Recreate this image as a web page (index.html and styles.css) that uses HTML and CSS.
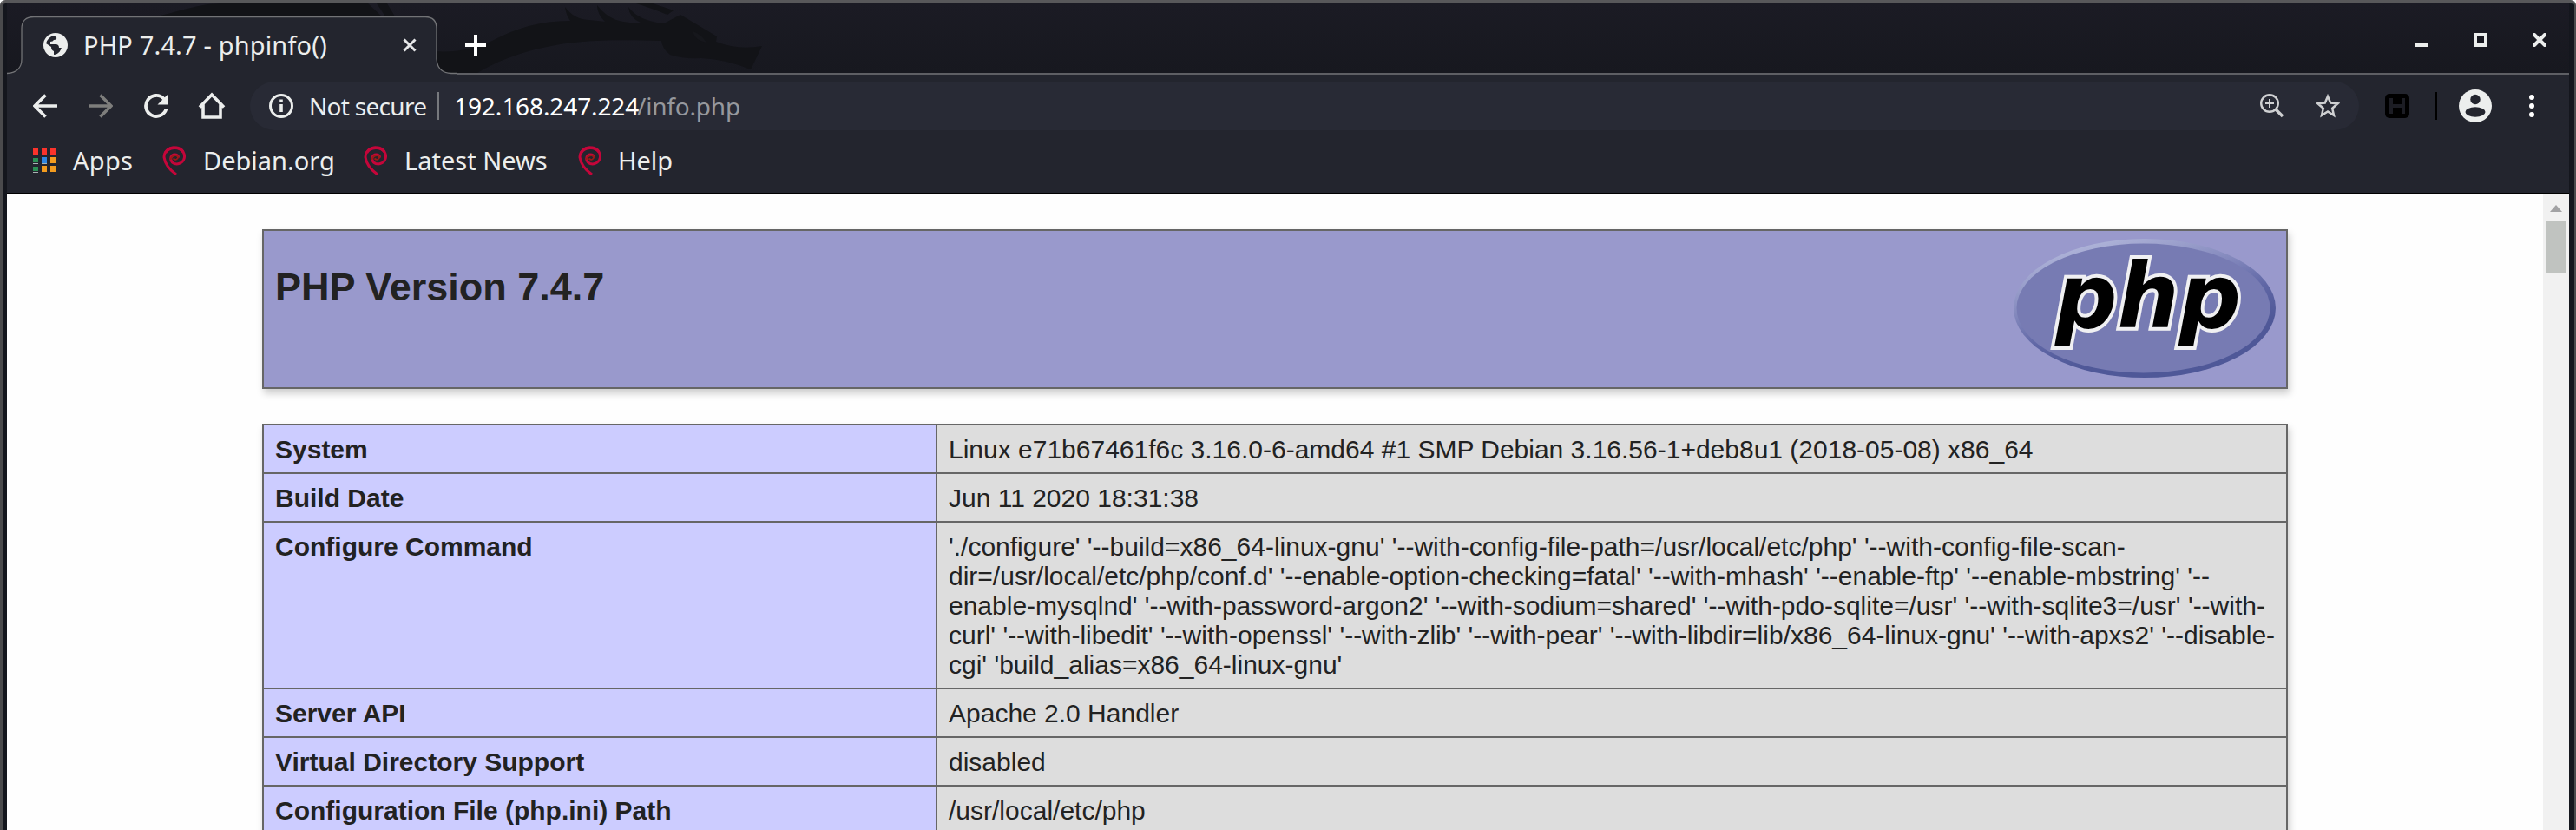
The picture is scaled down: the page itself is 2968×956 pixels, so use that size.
FILE: index.html
```html
<!DOCTYPE html>
<html lang="en">
<head>
<meta charset="utf-8">
<title>PHP 7.4.7 - phpinfo()</title>
<link rel="stylesheet" href="styles.css">
</head>
<body>
<svg class="defs" width="0" height="0" aria-hidden="true">
  <symbol id="swirl" viewBox="0 0 28 34">
    <path d="M16 33C9 28 3 21 2 13C2 6 8 1.800 14 2C21 2 26 7 25.500 13C25 19 19 22 14 20.500C9.500 19 8.500 13.500 11.500 11C14 9 18.500 10 18.500 13.500" fill="none" stroke="#c4063a" stroke-width="3"/>
    <path d="M9.500 16C10 12 15 9.500 18.500 12.500C17.500 16 15 17 12.500 14.500" fill="none" stroke="#9c1a16" stroke-width="1.800"/>
    <path d="M3.500 8C7 1 20 0 24 7" fill="none" stroke="#c4063a" stroke-width="3.500"/>
  </symbol>
</svg>
<div class="window">
  <header class="tabstrip">
    <svg class="dragon" width="900" height="80" viewBox="8 4 900 80">
      <path d="M180 19C220 10 230 4 260 4H424L440 19ZM434 4H446L455 19H444Z"/>
      <path d="M500 59C530 61 545 56 565 48C595 32 622 24 657 24Q652 17 651 8Q661 22 678 23Q690 24 697 25Q688 16 688 6Q700 22 718 25Q730 27 738 26Q725 20 724 8Q735 24 765 27L784 17L826 42L825 48Q850 58 878 53L865 80Q835 68 808 67Q785 68 772 63Q763 56 762 47C700 45 660 47 630 54C595 61 570 72 550 84H500Z"/>
      <path d="M733 4H752L776 12L769 17Q755 11 733 4Z"/>
      <path class="dragon-eye" d="M798 36Q808 39 814 49Q801 47 798 36Z"/>
    </svg>
    <div class="tab">
      <svg class="tab-shape" width="518" height="68" viewBox="0 0 518 68">
        <path class="tab-fill" d="M0 68V66C12 66 17 59 17 50V15Q17 1.500 31 1.500H482Q495 1.500 495 15V50Q496 66 510 66H518V68Z"/>
        <path class="tab-line" d="M0 66.500C12 66 17 59 17 50V15Q17 1.500 31 1.500H482Q495 1.500 495 15V50Q496 66 512 66.500H518"/>
      </svg>
      <svg class="favicon" width="28" height="28" viewBox="0 0 28 28">
        <circle cx="14" cy="14" r="14" fill="#eceeed"/>
        <path d="M3 12Q5 5 12 3L15 5Q16 8 12 8Q11 10 8 10V13H14Q18 13 18 17Q21 18 19 21Q16 25 12 25V21Q9 20 9 16Z" fill="#23252e"/>
        <path d="M9 14H14Q17 14 17 17H21L18 22Q16 18 12 18Z" fill="#23252e"/>
      </svg>
      <span class="tab-title">PHP 7.4.7 - phpinfo()</span>
      <svg class="tab-close" width="16" height="16" viewBox="0 0 16 16"><path d="M1.500 1.500L14.500 14.500M14.500 1.500L1.500 14.500" stroke="#e6e7e8" stroke-width="3"/></svg>
    </div>
    <svg class="new-tab" width="24" height="24" viewBox="0 0 24 24"><path d="M12 0V24M0 12H24" stroke="#fff" stroke-width="4"/></svg>
    <div class="controls">
      <svg width="16" height="16" viewBox="0 0 16 16"><path d="M0 14H16" stroke="#eceeed" stroke-width="4"/></svg>
      <svg width="16" height="16" viewBox="0 0 16 16"><path d="M2 2H14V14H2Z" fill="none" stroke="#eceeed" stroke-width="4"/></svg>
      <svg width="16" height="16" viewBox="0 0 16 16"><path d="M2 2L14 14M14 2L2 14" stroke="#eceeed" stroke-width="4" stroke-linecap="round"/></svg>
    </div>
  </header>

  <nav class="toolbar">
    <div class="nav-buttons">
      <svg width="28" height="28" viewBox="0 0 28 28"><path d="M28 14H3M14.500 1.500L2 14L14.500 26.500" fill="none" stroke="#eceeed" stroke-width="3.600"/></svg>
      <svg width="28" height="28" viewBox="0 0 28 28"><path d="M0 14H25M13.500 1.500L26 14L13.500 26.500" fill="none" stroke="#7e7e7c" stroke-width="3.600"/></svg>
      <svg width="28" height="28" viewBox="0 0 28 28"><path d="M25.500 17.500A12 12 0 1 1 23 6" fill="none" stroke="#eceeed" stroke-width="3.800"/><path d="M28 0V12.500H15.500Z" fill="#eceeed"/></svg>
      <svg width="32" height="32" viewBox="0 0 32 32"><path d="M2 17.500L16 3L30 17.500M6 14V29H26V14" fill="none" stroke="#eceeed" stroke-width="3.600"/></svg>
    </div>
    <div class="omnibox">
      <svg class="info" width="28" height="28" viewBox="0 0 28 28"><circle cx="14" cy="14" r="12.500" fill="none" stroke="#eceeed" stroke-width="3"/><path d="M14 12V21M14 6.500V10" stroke="#eceeed" stroke-width="3.600"/></svg>
      <span class="secure">Not secure</span>
      <span class="sep"></span>
      <span class="host">192.168.247.224</span><span class="path">/info.php</span>
      <svg class="magnify" width="28" height="28" viewBox="0 0 28 28"><circle cx="11" cy="11" r="9.800" fill="none" stroke="#cfd0d2" stroke-width="2.400"/><path d="M11 6V16M6 11H16" stroke="#cfd0d2" stroke-width="2"/><path d="M18 18L26 26" stroke="#cfd0d2" stroke-width="3.600"/></svg>
      <svg class="star" width="28" height="28" viewBox="0 0 28 28"><path d="M14 3L17.200 10.600L25.400 11.300L19.200 16.700L21 24.800L14 20.500L7 24.800L8.800 16.700L2.600 11.300L10.800 10.600Z" fill="none" stroke="#cfd0d2" stroke-width="2.500"/></svg>
    </div>
    <svg class="ext" width="28" height="28" viewBox="0 0 28 28"><rect width="28" height="28" rx="5" fill="#000"/><path d="M7 5V23M21 5V23M7 14H21" stroke="#1c1d24" stroke-width="4"/></svg>
    <span class="ext-sep"></span>
    <svg class="avatar" width="38" height="38" viewBox="0 0 38 38"><circle cx="19" cy="19" r="19" fill="#eceeed"/><circle cx="19" cy="11.500" r="5.700" fill="#23252e"/><ellipse cx="19" cy="26" rx="11.500" ry="5.700" fill="#23252e"/></svg>
    <svg class="dots" width="6" height="26" viewBox="0 0 6 26"><g fill="#fff"><circle cx="3" cy="3" r="3"/><circle cx="3" cy="13" r="3"/><circle cx="3" cy="23" r="3"/></g></svg>
  </nav>

  <nav class="bookmarks">
    <svg class="apps" width="26" height="28" viewBox="0 0 26 28">
      <path fill="#fb332b" d="M0 0h6v7H0zM10 0h6v7h-6zM20 0h6v7h-6z"/>
      <path fill="#2b9155" d="M0 11h6v5H0zM0 21h6v5H0z"/>
      <path fill="#2f86e0" d="M10 10h6v7h-6z"/>
      <path fill="#f39c1f" d="M20 10h6v7h-6zM10 20h6v7h-6zM20 20h6v7h-6z"/>
      <path fill="#a9b4b4" d="M0 7h6v1H0zM10 7h6v1h-6zM20 7h6v1h-6zM0 17h6v1H0zM10 17h6v1h-6zM0 27h6v1H0z"/>
    </svg>
    <span class="bm bm-apps">Apps</span>
    <svg class="swirl" width="28" height="34"><use href="#swirl"/></svg>
    <span class="bm bm-debian">Debian.org</span>
    <svg class="swirl" width="28" height="34"><use href="#swirl"/></svg>
    <span class="bm bm-news">Latest News</span>
    <svg class="swirl" width="28" height="34"><use href="#swirl"/></svg>
    <span class="bm bm-help">Help</span>
  </nav>

  <main class="viewport">
    <div class="page">
      <section class="banner">
        <h1>PHP Version 7.4.7</h1>
        <svg class="logo" width="302" height="162" viewBox="0 0 302 162">
          <defs>
            <linearGradient id="rim" x1="0.250" y1="0" x2="0.750" y2="1">
              <stop offset="0" stop-color="#b4b9dc"/>
              <stop offset="0.350" stop-color="#8287bc"/>
              <stop offset="0.550" stop-color="#5f66a5"/>
              <stop offset="0.750" stop-color="#4f5898"/>
            </linearGradient>
          </defs>
          <ellipse cx="151" cy="81" rx="151" ry="80" fill="url(#rim)"/>
          <ellipse cx="149.500" cy="81" rx="146" ry="74.500" fill="#777bb3"/>
          <text x="48" y="103" textLength="214" lengthAdjust="spacingAndGlyphs">php</text>
        </svg>
      </section>
      <table class="info-table">
        <colgroup><col class="col-name"><col></colgroup>
        <tr><th>System</th><td>Linux e71b67461f6c 3.16.0-6-amd64 #1 SMP Debian 3.16.56-1+deb8u1 (2018-05-08) x86_64</td></tr>
        <tr><th>Build Date</th><td>Jun 11 2020 18:31:38</td></tr>
        <tr><th>Configure Command</th><td>'./configure' '--build=x86_64-linux-gnu' '--with-config-file-path=/usr/local/etc/php' '--with-config-file-scan-<br>dir=/usr/local/etc/php/conf.d' '--enable-option-checking=fatal' '--with-mhash' '--enable-ftp' '--enable-mbstring' '--<br>enable-mysqlnd' '--with-password-argon2' '--with-sodium=shared' '--with-pdo-sqlite=/usr' '--with-sqlite3=/usr' '--with-<br>curl' '--with-libedit' '--with-openssl' '--with-zlib' '--with-pear' '--with-libdir=lib/x86_64-linux-gnu' '--with-apxs2' '--disable-<br>cgi' 'build_alias=x86_64-linux-gnu'</td></tr>
        <tr><th>Server API</th><td>Apache 2.0 Handler</td></tr>
        <tr><th>Virtual Directory Support</th><td>disabled</td></tr>
        <tr><th>Configuration File (php.ini) Path</th><td>/usr/local/etc/php</td></tr>
      </table>
    </div>
    <aside class="scrollbar">
      <svg width="14" height="8" viewBox="0 0 14 8"><path d="M7 0L14 8H0Z" fill="#a2a2a4"/></svg>
      <div class="thumb"></div>
    </aside>
  </main>
</div>
</body>
</html>
```
FILE: styles.css
```css
* { box-sizing: border-box; }
body { margin: 0; background: #fff; overflow: hidden; }
svg { display: block; flex: none; }
.defs { position: absolute; }

.window {
  width: 2968px;
  height: 956px;
  display: flex;
  flex-direction: column;
  overflow: hidden;
  border: solid #58585a;
  border-width: 4px 2px 0 4px;
  border-color: #58585a #4a4a4c #4a4a4c;
  border-radius: 6px 6px 0 0;
  background: #14161d;
  padding: 0 6px 0 4px;
  font-family: "Noto Sans", sans-serif;
  color: #eceeed;
}

.tabstrip {
  position: relative;
  flex: none;
  height: 82px;
  display: flex;
  align-items: flex-start;
  background: linear-gradient(#1b1b24, #17181f);
  border-bottom: 2px solid #5e5f64;
}
.dragon { position: absolute; left: 0; top: 0; fill: #121317; }
.dragon-eye { fill: #16171c; }
.tab {
  position: relative;
  width: 518px;
  height: 68px;
  margin: 14px 0 -2px;
  padding-left: 42px;
  display: flex;
  align-items: center;
}
.tab-shape { position: absolute; left: 0; top: 0; }
.tab-fill { fill: #23252e; }
.tab-line { fill: none; stroke: #727376; stroke-width: 1.3; }
.favicon, .tab-title, .tab-close { position: relative; }
.tab-title {
  width: 368px;
  margin-left: 18px;
  font-size: 29px;
  line-height: 40px;
  letter-spacing: 0.15px;
  padding-bottom: 1px;
  white-space: nowrap;
}
.new-tab { position: relative; margin: 36px 0 0 10px; }
.controls { display: flex; gap: 52px; margin: 34px 26px 0 auto; }

.toolbar {
  flex: none;
  height: 72px;
  padding: 0 40px 0 30px;
  display: flex;
  align-items: center;
  background: #23252e;
}
.nav-buttons { width: 250px; display: flex; align-items: center; gap: 36px; }
.nav-buttons svg:last-child { margin-left: -2px; }
.omnibox {
  width: 2430px;
  height: 56px;
  border-radius: 28px;
  background: #282a35;
  padding: 0 22px;
  display: flex;
  align-items: center;
  font-size: 28px;
  line-height: 40px;
  white-space: nowrap;
}
.secure { width: 148px; margin-left: 18px; letter-spacing: -0.7px; }
.sep { width: 2px; height: 32px; margin-right: 17px; background: #77797e; }
.host { width: 211px; color: #fff; letter-spacing: -0.1px; }
.path { color: #96989d; letter-spacing: -0.2px; }
.magnify { margin-left: auto; }
.star { margin-left: 36px; }
.ext { margin-left: 30px; }
.ext-sep { width: 2px; height: 32px; margin-left: 30px; background: #000; }
.avatar { margin-left: 25px; }
.dots { margin-left: auto; }

.bookmarks {
  flex: none;
  height: 66px;
  padding: 0 0 10px 30px;
  display: flex;
  align-items: center;
  background: #23252e;
  border-bottom: 2px solid #000;
  font-size: 29px;
  line-height: 40px;
  white-space: nowrap;
}
.bm { margin-left: 20px; }
.bm-apps { width: 103px; letter-spacing: 0.3px; }
.bm-debian { width: 185px; margin-left: 19px; }
.bm-news { width: 200px; margin-left: 19px; }
.bm-help { margin-left: 18px; }

.viewport { flex: 1; display: flex; min-height: 0; overflow: hidden; background: #fefefe; }
.page { width: 2922px; padding: 40px 0 0 294px; font-family: "Liberation Sans", Arial, sans-serif; color: #222; }
.banner {
  width: 2334px;
  height: 184px;
  padding: 10px 12px;
  display: flex;
  justify-content: space-between;
  border: 2px solid #666;
  background: #9999cc;
  box-shadow: 2px 5px 8px #ccc;
}
h1 { margin: 29px 0 0 1px; font-size: 45px; line-height: 52px; }
.logo { margin-top: -2px; }
.logo text {
  font: italic bold 103px "DejaVu Sans", sans-serif;
  fill: #000;
  stroke: #f0f0f2;
  stroke-width: 8px;
  paint-order: stroke;
}
.info-table {
  width: 2334px;
  margin-top: 40px;
  table-layout: fixed;
  border-collapse: collapse;
  box-shadow: 2px 5px 8px #ccc;
  font-size: 30px;
  line-height: 34px;
}
.col-name { width: 776px; }
.info-table th, .info-table td {
  border: 2px solid #666;
  padding: 11px 12px 9px 13px;
  text-align: left;
  vertical-align: baseline;
  white-space: nowrap;
}
.info-table th { background: #ccccff; }
.info-table td { background: #dddddd; }

.scrollbar {
  width: 30px;
  background: #f1f1f1;
  padding-top: 12px;
  display: flex;
  flex-direction: column;
  align-items: center;
}
.thumb { width: 22px; height: 60px; margin-top: 10px; background: #c0c3c0; }
```
